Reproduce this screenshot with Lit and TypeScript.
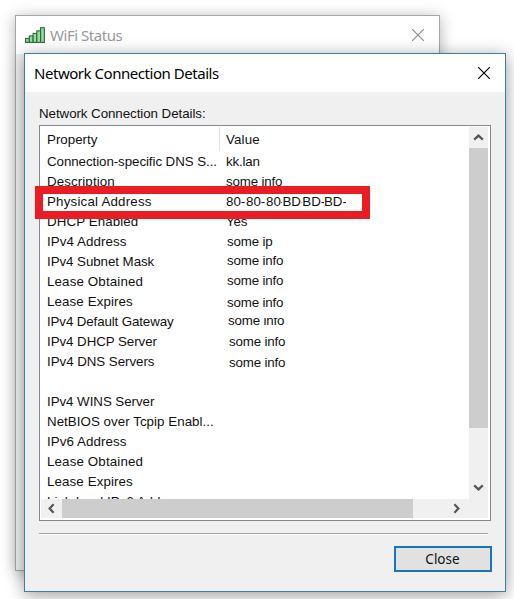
import { LitElement, html, css, svg } from "lit";
import { customElement } from "lit/decorators.js";
import { styleMap } from "lit/directives/style-map.js";

interface Row {
  name: string;
  spacing?: number;
  value?: string;
  dx?: number;
  dy?: number;
  clipTop?: number;
  parts?: [string, number][];
}

const ROWS: Row[] = [
  { name: "Connection-specific DNS S...", spacing: -0.07, value: "kk.lan" },
  { name: "Description", spacing: 0.1, value: "some info" },
  {
    name: "Physical Address",
    spacing: 0.2,
    parts: [
      ["80-", 20], ["80-", 20], ["80", 14.6], ["-", 1.8], ["BD", 18.5],
      ["-", 1.4], ["BD", 18.5], ["-", 3.1], ["BD", 18.5], ["-", 3.2],
    ],
  },
  { name: "DHCP Enabled", spacing: 0.1, value: "Yes" },
  { name: "IPv4 Address", spacing: 0.09, value: "some ip", dx: 1 },
  { name: "IPv4 Subnet Mask", spacing: -0.06, value: "some info", dx: 1, dy: -1 },
  { name: "Lease Obtained", spacing: 0.14, value: "some info", dx: 1, dy: -1 },
  { name: "Lease Expires", spacing: 0.11, value: "some info", dx: 1, dy: 1 },
  { name: "IPv4 Default Gateway", spacing: -0.12, value: "some info", dx: 2, dy: -1, clipTop: 7 },
  { name: "IPv4 DHCP Server", spacing: -0.06, value: "some info", dx: 3 },
  { name: "IPv4 DNS Servers", spacing: -0.04, value: "some info", dx: 3, dy: 1 },
  { name: "" },
  { name: "IPv4 WINS Server", spacing: -0.05 },
  { name: "NetBIOS over Tcpip Enabl...", spacing: 0.04 },
  { name: "IPv6 Address", spacing: 0.09 },
  { name: "Lease Obtained", spacing: 0.14 },
  { name: "Lease Expires", spacing: 0.11 },
  { name: "Link-local IPv6 Address" },
];

@customElement("app-root")
export class AppRoot extends LitElement {
  static styles = css`
    :host {
      display: block;
      position: relative;
      width: 514px;
      height: 599px;
      overflow: hidden;
      background: #fff;
      color: #111;
      font: 13.33px/20px "Liberation Sans", Arial, sans-serif;
    }
    * { box-sizing: border-box; }
    svg { display: block; flex: none; }
    .window { position: absolute; display: flex; flex-direction: column; background: #f0f0f0; }
    .back {
      left: 15px; top: 15px; width: 425px; height: 556px;
      border: 1px solid #a5a5a5;
      box-shadow: 0 2px 14px rgba(0, 0, 0, 0.3);
    }
    .front {
      left: 24px; top: 53px; width: 482px; height: 539px;
      border: 1px solid #3b7ea3;
      box-shadow: 0 3px 16px rgba(0, 0, 0, 0.4);
    }
    .titlebar {
      display: flex; align-items: center; height: 38px; flex: none;
      background: #fff;
      font-family: "Noto Sans", "Open Sans", sans-serif;
      font-size: 15px;
    }
    .back .titlebar { padding: 0 15px 0 9px; color: #9a9a9a; gap: 5px; }
    .front .titlebar { padding: 0 15px 0 9px; color: #000; }
    .title { flex: 1; white-space: nowrap; letter-spacing: -0.46px; }
    .body { display: flex; flex-direction: column; padding: 12px 14px 0; }
    .caption { height: 21px; white-space: nowrap; letter-spacing: -0.06px; }
    .list {
      width: 452px; height: 396px; border: 1px solid #828790; background: #fff;
      padding: 1px; display: grid;
      grid-template: 372px 20px / 428px 20px;
    }
    .table { overflow: hidden; padding-left: 6px; }
    .row { display: grid; grid-template-columns: 179px 1fr; height: 20px; white-space: nowrap; }
    .head { height: 25px; line-height: 25px; }
    .head .val { border-left: 1px solid #e2e2e2; margin-left: -7px; padding-left: 6px; letter-spacing: 0.15px; }
    .head .val, .head .key { height: 24px; }
    .value { letter-spacing: -0.18px; }
    .parts { display: flex; }
    .part { flex: none; overflow: hidden; }
    .vbar { display: flex; flex-direction: column; background: #f0f0f0; width: 19px; }
    .hbar { display: flex; background: #f0f0f0; grid-column: 1 / 3; height: 19px; width: 447px; }
    .vthumb { height: 280px; background: #cdcdcd; }
    .hthumb { width: 351px; background: #cdcdcd; }
    .btn { width: 19px; height: 21px; display: grid; place-items: center; }
    .gap { flex: 1; }
    .vbar .end { margin-bottom: 1px; }
    .hbar .btn { width: 21px; height: 19px; }
    .hbar .end { margin-right: 21px; }
    .rule { width: 449px; height: 2px; margin-top: 12px; border-top: 1px solid #a0a0a0; background: #fff; }
    .close {
      align-self: flex-end; margin: 11px -1px 0 0; width: 98px; height: 26px;
      border: 2px solid #1874bb; background: #e1e1e1; text-align: center;
      font: 13.5px/22px "Noto Sans", "Open Sans", sans-serif; color: #111; padding: 0 1px 0 0;
    }
    .mark { position: absolute; left: 35px; top: 186px; width: 335px; height: 33px; border: 8px solid #ea1c24; }
  `;

  private cross(color: string) {
    return html`<svg width="12" height="12" viewBox="0 0 12 12">
      <path d="M0 0L12 12M12 0L0 12" stroke=${color} stroke-width="1.15" />
    </svg>`;
  }

  private chevron(angle: number) {
    return html`<svg width="11" height="11" viewBox="0 0 11 11">
      <path d="M1.2 7.6L5.5 3.6L9.8 7.6" fill="none" stroke="#555" stroke-width="2.2" transform="rotate(${angle} 5.5 5.5)" />
    </svg>`;
  }

  private valueCell(r: Row) {
    if (r.parts) {
      return html`<div class="parts">
        ${r.parts.map(([t, w]) => html`<span class="part" style=${styleMap({ width: `${w}px` })}>${t}</span>`)}
      </div>`;
    }
    return html`<div
      class="value"
      style=${styleMap({
        transform: `translate(${r.dx ?? 0}px, ${r.dy ?? 0}px)`,
        clipPath: r.clipTop ? `inset(${r.clipTop}px 0 0 0)` : "none",
      })}
    >${r.value ?? ""}</div>`;
  }

  render() {
    return html`
      <div class="window back">
        <div class="titlebar">
          <svg width="20" height="16" viewBox="0 0 20 16">
            ${[4, 6.5, 9, 11.5, 14.7].map(
              (h, i) => svg`<rect x=${0.6 + i * 3.75} y=${15.4 - h} width="3.75" height=${h} fill="#8ee29b" stroke="#35633f" stroke-width="1.1" />`
            )}
          </svg>
          <span class="title">WiFi Status</span>
          ${this.cross("#8c8c8c")}
        </div>
      </div>
      <div class="window front">
        <div class="titlebar">
          <span class="title">Network Connection Details</span>
          ${this.cross("#000")}
        </div>
        <div class="body">
          <div class="caption">Network Connection Details:</div>
          <div class="list">
            <div class="table">
              <div class="row head"><div class="key">Property</div><div class="val">Value</div></div>
              ${ROWS.map(
                (r) => html`<div class="row">
                  <div style=${styleMap({ letterSpacing: `${r.spacing ?? 0}px` })}>${r.name}</div>
                  ${this.valueCell(r)}
                </div>`
              )}
            </div>
            <div class="vbar">
              <div class="btn">${this.chevron(0)}</div>
              <div class="vthumb"></div>
              <div class="gap"></div>
              <div class="btn end">${this.chevron(180)}</div>
            </div>
            <div class="hbar">
              <div class="btn">${this.chevron(-90)}</div>
              <div class="hthumb"></div>
              <div class="gap"></div>
              <div class="btn end">${this.chevron(90)}</div>
            </div>
          </div>
          <div class="rule"></div>
          <button class="close">Close</button>
        </div>
      </div>
      <div class="mark"></div>
    `;
  }
}
